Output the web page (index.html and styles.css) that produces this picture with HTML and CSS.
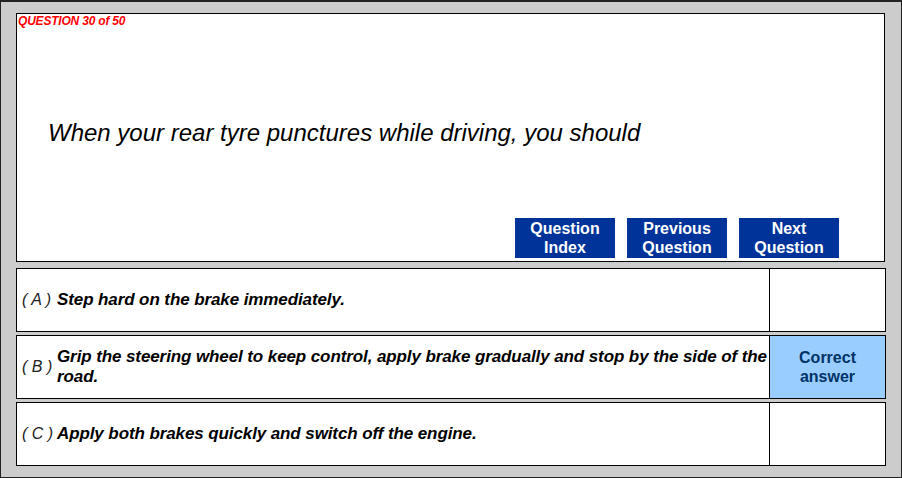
FILE: index.html
```html
<!DOCTYPE html>
<html>
<head>
<meta charset="utf-8">
<link rel="stylesheet" href="styles.css">
</head>
<body>
<div class="frame">
  <div class="question-box">
    <div class="q-number">QUESTION 30 of 50</div>
    <div class="q-text">When your rear tyre punctures while driving, you should</div>
    <div class="nav">
      <div class="btn">Question<br>Index</div>
      <div class="btn">Previous<br>Question</div>
      <div class="btn">Next<br>Question</div>
    </div>
  </div>
  <div class="options">
    <div class="option">
      <div class="opt-main"><span class="label">( A )</span><span class="opt-text">Step hard on the brake immediately.</span></div>
      <div class="opt-side"></div>
    </div>
    <div class="option">
      <div class="opt-main"><span class="label">( B )</span><span class="opt-text">Grip the steering wheel to keep control, apply brake gradually and stop by the side of the road.</span></div>
      <div class="opt-side correct">Correct<br>answer</div>
    </div>
    <div class="option">
      <div class="opt-main"><span class="label">( C )</span><span class="opt-text">Apply both brakes quickly and switch off the engine.</span></div>
      <div class="opt-side"></div>
    </div>
  </div>
</div>
</body>
</html>
```

FILE: styles.css
```css
* { box-sizing: border-box; }
html, body { margin: 0; padding: 0; }
body { font-family: "Liberation Sans", Arial, sans-serif; background: #cccccc; }

.frame {
  width: 902px;
  height: 478px;
  background: #cccccc;
  border: 1px solid #222;
  border-top-width: 2px;
  padding: 11px 16px 0 15px;
  display: flex;
  flex-direction: column;
}

.question-box {
  width: 869px;
  height: 249px;
  background: #fff;
  border: 1px solid #000;
  display: flex;
  flex-direction: column;
  padding: 1px 0 3px 1px;
}

.q-number {
  color: #ff0000;
  font-weight: bold;
  font-style: italic;
  font-size: 12px;
  letter-spacing: -0.2px;
  line-height: 13px;
}

.q-text {
  font-style: italic;
  font-size: 24px;
  color: #000;
  margin: 91px 0 0 30px;
  line-height: 27px;
}

.nav {
  margin-top: auto;
  display: flex;
  gap: 12px;
  padding-left: 497px;
}

.btn {
  width: 100px;
  height: 40px;
  background: #003399;
  color: #fff;
  font-weight: bold;
  font-size: 16px;
  line-height: 19px;
  text-align: center;
  padding-top: 1px;
}

.options {
  margin-top: 6px;
  display: flex;
  flex-direction: column;
  gap: 3px;
  width: 870px;
}

.option {
  height: 64px;
  background: #fff;
  border: 1px solid #000;
  display: flex;
}

.opt-main {
  flex: 1;
  display: flex;
  align-items: center;
  padding-left: 5px;
  border-right: 1px solid #000;
}

.label {
  font-style: italic;
  font-size: 16px;
  color: #222;
  width: 35px;
  flex: none;
  letter-spacing: 0;
}

.opt-text {
  font-weight: bold;
  font-style: italic;
  font-size: 17px;
  letter-spacing: -0.1px;
  line-height: 20px;
  color: #000;
}

.opt-side {
  width: 115px;
  flex: none;
  display: flex;
  align-items: center;
  justify-content: center;
  text-align: center;
}

.opt-side.correct {
  background: #99ccff;
  color: #003366;
  font-weight: bold;
  font-size: 16px;
  line-height: 19px;
}
```
